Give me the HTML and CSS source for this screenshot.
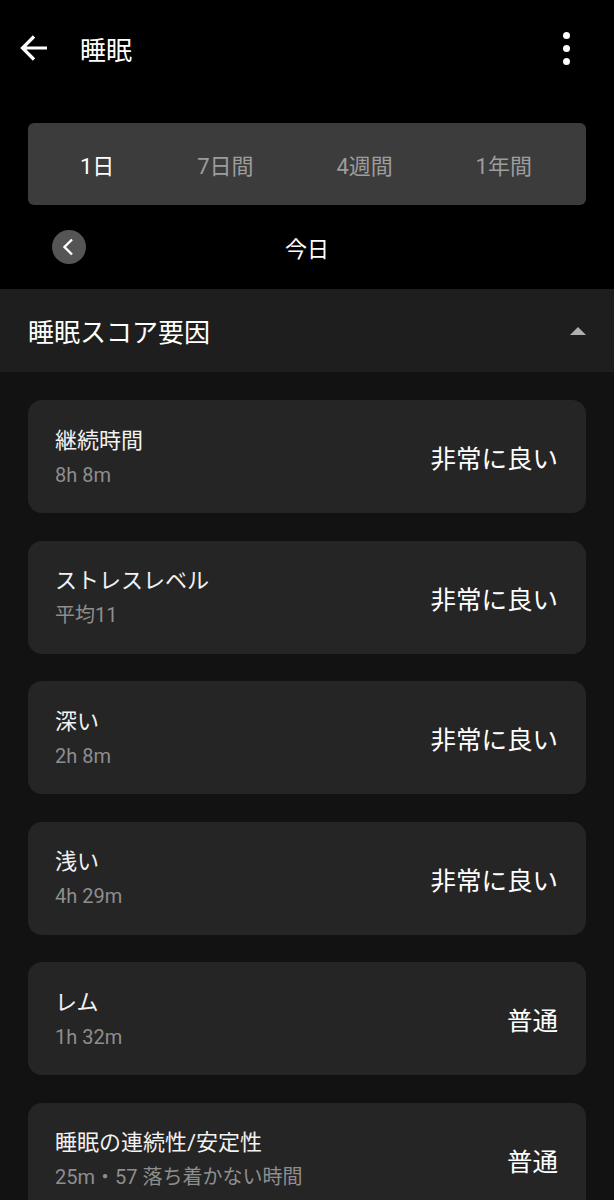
FILE: index.html
```html
<!DOCTYPE html>
<html lang="ja">
<head>
    <meta charset="UTF-8">
    <meta name="viewport" content="width=device-width, initial-scale=1.0">
    <title>睡眠</title>
    <link rel="stylesheet" href="styles.css">
</head>
<body>

<div class="top">
    <div class="appbar">
        <svg class="back" width="32" height="32" viewBox="0 0 32 32">
            <path d="M29 16H5M16 4.5L4.5 16 16 27.5" fill="none" stroke="#fff" stroke-width="3.2" stroke-linecap="butt"/>
        </svg>
        <div class="title">睡眠</div>
        <div class="kebab"><span></span><span></span><span></span></div>
    </div>

    <div class="tabs">
        <div class="tab active">1日</div>
        <div class="tab">7日間</div>
        <div class="tab">4週間</div>
        <div class="tab">1年間</div>
    </div>

    <div class="daterow">
        <div class="prev">
            <svg width="34" height="34" viewBox="0 0 34 34">
                <path d="M20 9.5L12.5 17 20 24.5" fill="none" stroke="#fff" stroke-width="2.4"/>
            </svg>
        </div>
        <div class="date">今日</div>
    </div>
</div>

<div class="section">
    <div class="section-title">睡眠スコア要因</div>
    <div class="caret"></div>
</div>

<div class="list">
    <div class="card">
        <div class="info">
            <div class="name">継続時間</div>
            <div class="sub">8h 8m</div>
        </div>
        <div class="value">非常に良い</div>
    </div>
    <div class="card">
        <div class="info">
            <div class="name">ストレスレベル</div>
            <div class="sub">平均11</div>
        </div>
        <div class="value">非常に良い</div>
    </div>
    <div class="card">
        <div class="info">
            <div class="name">深い</div>
            <div class="sub">2h 8m</div>
        </div>
        <div class="value">非常に良い</div>
    </div>
    <div class="card">
        <div class="info">
            <div class="name">浅い</div>
            <div class="sub">4h 29m</div>
        </div>
        <div class="value">非常に良い</div>
    </div>
    <div class="card">
        <div class="info">
            <div class="name">レム</div>
            <div class="sub">1h 32m</div>
        </div>
        <div class="value">普通</div>
    </div>
    <div class="card">
        <div class="info">
            <div class="name">睡眠の連続性/安定性</div>
            <div class="sub">25m・57 落ち着かない時間</div>
        </div>
        <div class="value">普通</div>
    </div>
</div>

</body>
</html>
```

FILE: styles.css
```css
body {
    margin: 0;
    background-color: #121212;
    color: #fff;
    font-family: Roboto, "Noto Sans CJK JP", sans-serif;
    overflow: hidden;
}
.top {
    background-color: #000;
    padding: 0 28px;
}
.appbar {
    height: 96px;
    display: flex;
    align-items: center;
}
.back {
    margin-left: -10px;
}
.title {
    font-size: 26px;
    margin-left: 30px;
    flex: 1;
}
.kebab {
    display: flex;
    flex-direction: column;
    gap: 6px;
    margin-right: 16px;
}
.kebab span {
    width: 7px;
    height: 7px;
    border-radius: 50%;
    background-color: #fff;
}
.tabs {
    margin-top: 27px;
    height: 82px;
    background-color: #3c3c3c;
    border-radius: 6px;
    display: flex;
    justify-content: space-between;
    align-items: center;
    padding: 0 54px 0 52px;
}
.tab {
    font-size: 22px;
    color: #9d9d9d;
}
.tab.active {
    color: #fff;
}
.daterow {
    height: 84px;
    display: flex;
    align-items: center;
    position: relative;
    justify-content: center;
}
.prev {
    position: absolute;
    left: 24px;
    top: 25px;
    width: 34px;
    height: 34px;
    border-radius: 50%;
    background-color: #555;
}
.prev svg {
    display: block;
}
.date {
    font-size: 22px;
}
.section {
    height: 83px;
    background-color: #1e1e1e;
    display: flex;
    align-items: center;
    padding: 0 28px;
}
.section-title {
    flex: 1;
    font-size: 26px;
}
.caret {
    width: 0;
    height: 0;
    border-left: 8px solid transparent;
    border-right: 8px solid transparent;
    border-bottom: 8px solid #b0b0b0;
}
.list {
    padding: 28px 28px;
    display: flex;
    flex-direction: column;
    gap: 27.5px;
}
.card {
    height: 113px;
    background-color: #252525;
    border-radius: 14px;
    display: flex;
    align-items: center;
    padding: 0 28px 0 27px;
}
.info {
    flex: 1;
}
.name {
    font-size: 22px;
    line-height: 30px;
    color: #f2f2f2;
}
.sub {
    font-size: 20px;
    line-height: 26px;
    margin-top: 6px;
    color: #8e8e8e;
}
.value {
    font-size: 25.5px;
}
```
